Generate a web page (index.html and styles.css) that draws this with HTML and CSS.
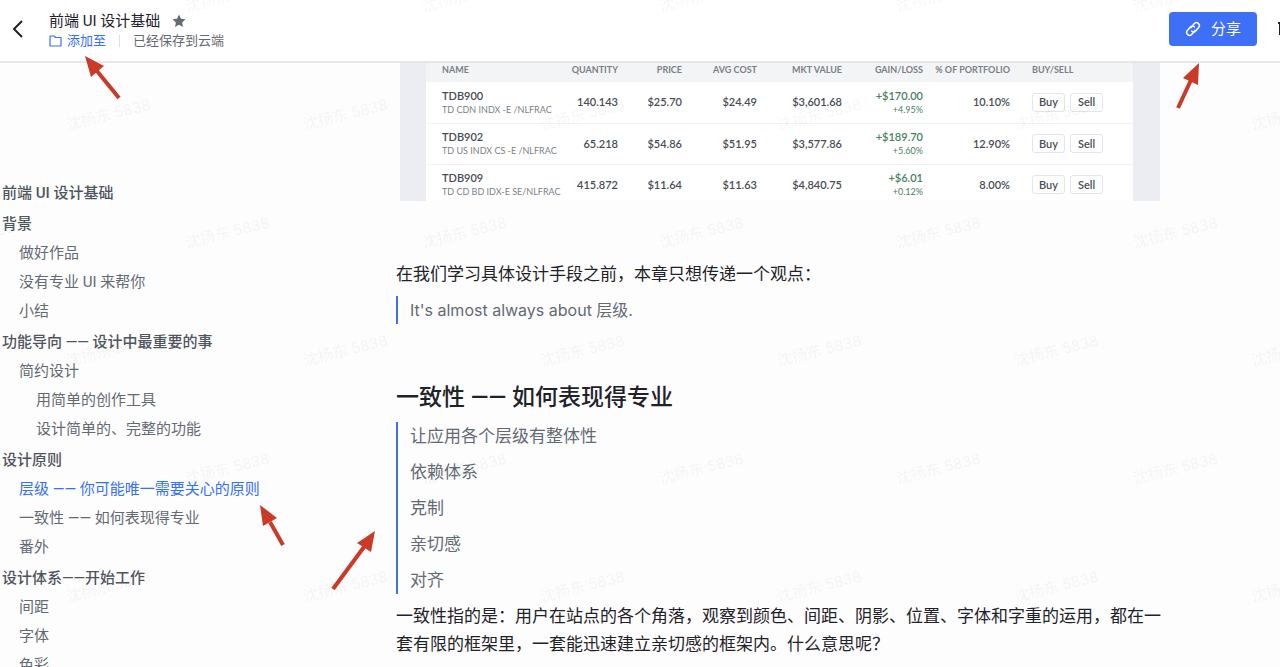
FILE: index.html
```
<!DOCTYPE html>
<html lang="zh-CN">
<head>
<meta charset="utf-8">
<title>前端 UI 设计基础</title>
<link rel="stylesheet" href="styles.css">
</head>
<body>
<header class="topbar">
  <button class="icon-btn back" aria-label="返回">
    <svg width="12" height="18" viewBox="0 0 12 18"><path d="M10 1 2 9l8 8" fill="none" stroke="#1f2329" stroke-width="2"/></svg>
  </button>
  <div class="doc-info">
    <div class="doc-title">
      <span>前端 UI 设计基础</span>
      <svg width="14" height="14" viewBox="0 0 24 24" aria-hidden="true"><path d="m12 1 3.400 7.100 7.600 1-5.600 5.400 1.400 7.800L12 18.500l-6.800 3.800 1.400-7.800L1 9.100l7.600-1z" fill="#646a73"/></svg>
    </div>
    <div class="doc-meta">
      <a class="add-link" href="#add">
        <svg width="13" height="12" viewBox="0 0 13 12" aria-hidden="true"><path d="M1 1h4l1.500 1.500H12V11H1z" fill="none" stroke="#3370ff" stroke-width="1.200" stroke-linejoin="round"/></svg>
        <span>添加至</span>
      </a>
      <span class="divider"></span>
      <span>已经保存到云端</span>
    </div>
  </div>
  <button class="share">
    <svg width="16" height="16" viewBox="0 0 16 16" fill="none" stroke="#fff" stroke-width="1.500" stroke-linecap="round" aria-hidden="true"><g transform="rotate(-50 8 8)"><path d="M8.500 10.500H3.200a2.900 2.900 0 0 1 0-5.800h4.300a2.900 2.900 0 0 1 2.900 2.900"/><path d="M7.500 5.500h5.300a2.900 2.900 0 0 1 0 5.800H8.500a2.900 2.900 0 0 1-2.900-2.900"/></g></svg>
    <span>分享</span>
  </button>
  <button class="icon-btn more" aria-label="通知">
    <svg width="16" height="16" viewBox="0 0 16 16"><path d="M0 2h14M2 2v12" fill="none" stroke="#1f2329" stroke-width="2"/></svg>
  </button>
</header>

<div class="page">
  <nav class="outline" aria-label="目录">
    <a class="top" href="#a">前端 UI 设计基础</a>
    <a class="top group" href="#b">背景</a>
    <a class="sub" href="#c">做好作品</a>
    <a class="sub" href="#d">没有专业 UI 来帮你</a>
    <a class="sub" href="#e">小结</a>
    <a class="top group" href="#f">功能导向 —— 设计中最重要的事</a>
    <a class="sub" href="#g">简约设计</a>
    <a class="leaf" href="#h">用简单的创作工具</a>
    <a class="leaf" href="#i">设计简单的、完整的功能</a>
    <a class="top group" href="#j">设计原则</a>
    <a class="sub current" href="#k">层级 —— 你可能唯一需要关心的原则</a>
    <a class="sub" href="#consistency">一致性 —— 如何表现得专业</a>
    <a class="sub" href="#m">番外</a>
    <a class="top group" href="#n">设计体系——开始工作</a>
    <a class="sub" href="#o">间距</a>
    <a class="sub" href="#p">字体</a>
    <a class="sub" href="#q">色彩</a>
  </nav>

  <main class="article">
    <figure class="figure">
      <table class="holdings">
        <colgroup><col class="c-name"><col class="c-qty"><col class="c-price"><col class="c-cost"><col class="c-value"><col class="c-gain"><col class="c-share"><col></colgroup>
        <thead>
          <tr><th class="left">NAME</th><th>QUANTITY</th><th>PRICE</th><th>AVG COST</th><th>MKT VALUE</th><th>GAIN/LOSS</th><th>% OF PORTFOLIO</th><th class="actions">BUY/SELL</th></tr>
        </thead>
        <tbody>
          <tr><td class="left">TDB900<small>TD CDN INDX -E /NLFRAC</small></td><td>140.143</td><td>$25.70</td><td>$24.49</td><td>$3,601.68</td><td class="gain">+$170.00<small>+4.95%</small></td><td>10.10%</td><td class="actions"><button>Buy</button><button>Sell</button></td></tr>
          <tr><td class="left">TDB902<small>TD US INDX CS -E /NLFRAC</small></td><td>65.218</td><td>$54.86</td><td>$51.95</td><td>$3,577.86</td><td class="gain">+$189.70<small>+5.60%</small></td><td>12.90%</td><td class="actions"><button>Buy</button><button>Sell</button></td></tr>
          <tr><td class="left">TDB909<small>TD CD BD IDX-E SE/NLFRAC</small></td><td>415.872</td><td>$11.64</td><td>$11.63</td><td>$4,840.75</td><td class="gain">+$6.01<small>+0.12%</small></td><td>8.00%</td><td class="actions"><button>Buy</button><button>Sell</button></td></tr>
        </tbody>
      </table>
    </figure>
    <p class="lead">在我们学习具体设计手段之前，本章只想传递一个观点：</p>
    <blockquote><p class="latin">It's almost always about 层级.</p></blockquote>
    <h2 id="consistency">一致性 —— 如何表现得专业</h2>
    <blockquote>
      <p>让应用各个层级有整体性</p>
      <p>依赖体系</p>
      <p>克制</p>
      <p>亲切感</p>
      <p>对齐</p>
    </blockquote>
    <p>一致性指的是：用户在站点的各个角落，观察到颜色、间距、阴影、位置、字体和字重的运用，都在一套有限的框架里，一套能迅速建立亲切感的框架内。什么意思呢？</p>
  </main>
</div>

<svg class="overlay" aria-hidden="true">
  <defs>
    <pattern id="mark" x="50" y="60" width="237" height="236" patternUnits="userSpaceOnUse">
      <text x="18" y="70" transform="rotate(-14 18 70)">沈扬东 5838</text>
      <text x="137" y="188" transform="rotate(-14 137 188)">沈扬东 5838</text>
    </pattern>
  </defs>
  <rect width="100%" height="100%" fill="url(#mark)"/>
</svg>
<svg class="overlay arrows" aria-hidden="true">
  <path d="M119 98 97 71"/><path class="head" d="m85 56 19 10-13 11z"/>
  <path d="m283 545-13-23"/><path class="head" d="m260 505 17 13-14 8z"/>
  <path d="m333 589 31-42"/><path class="head" d="m375 531-4 21-14-9z"/>
</svg>
<svg class="arrows arrow-share" width="24" height="48" viewBox="0 0 24 48" aria-hidden="true">
  <path d="m2 46 13-28"/><path class="head" d="m23 1-1 22-15-7z"/>
</svg>
</body>
</html>
```

FILE: styles.css
```
* { box-sizing: border-box; }
body {
  margin: 0;
  height: 100vh;
  display: flex;
  flex-direction: column;
  overflow: hidden;
  position: relative;
  background: #fdfdfd;
  color: #1f2329;
  font-family: Roboto, "Noto Sans CJK SC", sans-serif;
  font-size: 17px;
  line-height: 28px;
}
a { color: inherit; text-decoration: none; }
button { font: inherit; color: inherit; cursor: pointer; }
p, h2, figure, blockquote { margin: 0; }

.topbar {
  flex: none;
  display: flex;
  align-items: center;
  height: 63px;
  padding: 0 0 3px 12px;
  background: #fff;
  border-bottom: 2px solid #e6e7e9;
}
.icon-btn { display: flex; padding: 0; border: 0; background: none; }
.icon-btn svg { flex: none; }
.doc-info { flex: 1; margin-left: 25px; padding-top: 3px; }
.doc-title { display: flex; align-items: center; gap: 12px; font-size: 15px; line-height: 20px; }
.doc-meta { display: flex; align-items: center; font-size: 13px; line-height: 20px; color: #646a73; }
.add-link { display: flex; align-items: center; gap: 5px; color: #3370ff; }
.divider { width: 1px; height: 12px; margin: 0 13px; background: #dee0e3; }
.share {
  display: flex;
  align-items: center;
  gap: 10px;
  height: 34px;
  padding: 0 16px;
  border: 0;
  border-radius: 4px;
  background: #3d70f6;
  color: #fff;
  font-size: 15px;
}
.more { width: 2px; margin-left: 21px; overflow: hidden; }

.page { flex: 1; min-height: 0; display: grid; grid-template-columns: 396px minmax(0, 1fr); }
.outline {
  display: flex;
  flex-direction: column;
  padding: 116px 0 0 2px;
  font-size: 15px;
  line-height: 29px;
  color: #646a73;
  white-space: nowrap;
}
.top { font-weight: 500; color: #50555d; }
.group { margin-top: 2px; }
.sub { padding-left: 17px; }
.leaf { padding-left: 34px; }
.outline .current { color: #3370ff; }

.article { max-width: 766px; }
.figure {
  height: 138px;
  margin: 0 2px 0 4px;
  padding: 0 27px 0 26px;
  overflow: hidden;
  background: #ecedf2;
}
.holdings {
  width: 100%;
  table-layout: fixed;
  border-collapse: collapse;
  background: #fff;
  font: 600 11px/14px Lato, sans-serif;
  color: #484c55;
}
.c-name { width: 134px; }
.c-qty { width: 58px; }
.c-price { width: 64px; }
.c-cost { width: 75px; }
.c-value { width: 85px; }
.c-gain { width: 81px; }
.c-share { width: 87px; }
.holdings th { height: 19px; padding: 0 0 6px; background: #f3f4f6; font-size: 9px; line-height: 13px; text-align: right; color: #7b7f87; white-space: nowrap; }
.holdings td { height: 41px; padding: 0; border-bottom: 1px solid #f0f1f4; text-align: right; white-space: nowrap; }
.holdings .left { padding-left: 16px; text-align: left; }
.holdings .actions { padding-left: 22px; text-align: left; }
.holdings small { display: block; font-size: 9px; line-height: 13px; font-weight: 400; color: #7b7f87; }
.holdings .gain, .holdings .gain small { color: #47805f; }
.holdings button {
  height: 19px;
  width: 33px;
  margin-right: 5px;
  padding: 0;
  border: 1px solid #e4e5ea;
  border-radius: 3px;
  background: #fff;
}
.lead { margin-top: 59px; }
blockquote {
  display: grid;
  gap: 8px;
  margin: 8px 0;
  padding-left: 12px;
  border-left: 2px solid #3f70e8;
  color: #646a73;
}
.latin { font-family: Inter, "Noto Sans CJK SC", sans-serif; font-size: 16px; }
h2 { margin-top: 58px; font-size: 23px; font-weight: 500; line-height: 32px; }

.overlay { position: absolute; inset: 0; width: 100%; height: 100%; pointer-events: none; }
.overlay text { font-family: Inter, "Noto Sans CJK SC", sans-serif; font-size: 15px; fill: #1f2329; fill-opacity: .04; }
.arrows { fill: none; stroke: #c93a28; stroke-width: 4; pointer-events: none; }
.arrows .head { fill: #c93a28; stroke: none; }
.arrow-share { position: absolute; top: 62px; right: 80px; }
```
